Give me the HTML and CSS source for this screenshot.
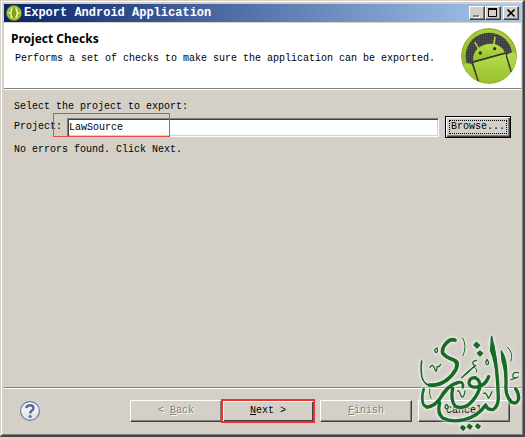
FILE: index.html
```html
<!DOCTYPE html>
<html lang="en">
<head>
<meta charset="utf-8">
<title>Export Android Application</title>
<link rel="stylesheet" href="styles.css">
</head>
<body>
<main class="window">
  <div class="titlebar">
    <svg class="app-icon" viewBox="0 0 16 16" aria-hidden="true">
      <circle cx="8" cy="8" r="7.6" fill="#a9cc28" stroke="#5d7710" stroke-width=".8"/>
      <circle cx="8" cy="8" r="5.4" fill="#809f16"/>
      <path d="M6.7 3.8Q5 4 5.2 6.2Q5.2 7.6 4 8Q5.2 8.4 5.2 10Q5 12 6.7 12.2M9.3 3.8Q11 4 10.8 6.2Q10.8 7.6 12 8Q10.8 8.4 10.8 10Q11 12 9.3 12.2" fill="none" stroke="#f2f9c0" stroke-width="1.5"/>
    </svg>
    <h1 class="caption">Export Android Application</h1>
    <div class="controls">
      <button class="control" type="button" aria-label="Minimize"><svg viewBox="0 0 12 10"><path d="M3 9h6" stroke="#fff" stroke-width="2"/><path d="M2 8h6" stroke="#808080" stroke-width="2"/></svg></button>
      <button class="control" type="button" aria-label="Maximize"><svg viewBox="0 0 12 10"><path d="M1.5 1v7.500h8V1" fill="none" stroke="#000"/><path d="M1 1h9" stroke="#000" stroke-width="2"/></svg></button>
      <button class="control close" type="button" aria-label="Close"><svg viewBox="0 0 12 10"><path d="M2.500 1.500l7 7M9.500 1.500l-7 7" stroke="#000" stroke-width="1.700"/></svg></button>
    </div>
  </div>
  <header class="banner">
    <div class="banner-text">
      <h2>Project Checks</h2>
      <p>Performs a set of checks to make sure the application can be exported.</p>
    </div>
    <svg class="logo" viewBox="0 0 168 168" aria-hidden="true">
      <defs>
        <linearGradient id="ring" x1="0" y1="0" x2="0" y2="1"><stop offset="0" stop-color="#aad03a"/><stop offset="1" stop-color="#86a91e"/></linearGradient>
        <linearGradient id="robot" x1="0" y1="0" x2="0" y2="1"><stop offset="0" stop-color="#b5dc4c"/><stop offset="1" stop-color="#98bf28"/></linearGradient>
        <pattern id="mesh" width="6" height="6" patternUnits="userSpaceOnUse"><path d="M0 0h6v6H0z" fill="#3c3e40"/><path d="M0 0h3v3H0z" fill="#55585a"/></pattern>
        <clipPath id="disc"><circle cx="84" cy="84" r="82"/></clipPath>
      </defs>
      <circle cx="84" cy="84" r="82" fill="url(#ring)" stroke="#86a52a" stroke-width="3"/>
      <circle cx="84" cy="84" r="70" fill="url(#mesh)"/>
      <g clip-path="url(#disc)">
        <path d="M42 44l12 20M102 28l-4 24" stroke="#a9cf42" stroke-width="5" stroke-linecap="round"/>
        <path d="M36 100C34 70 53 55 76 49C102 43 124 54 132 74z" fill="url(#robot)"/>
        <path d="M37 104L133 77L158 168H54z" fill="url(#robot)"/>
        <path d="M0 118Q17 99 34 110L54 168H0zM136 83Q150 68 164 77L168 140L150 138z" fill="url(#robot)"/>
        <path d="M36 102L134 75M35 109l18 54M136 82l16 54" stroke="#35382c" stroke-width="4" fill="none"/>
      </g>
      <circle cx="58" cy="75" r="5" fill="#303426"/><circle cx="101" cy="62" r="5" fill="#303426"/>
    </svg>
  </header>
  <form class="page">
    <p>Select the project to export:</p>
    <div class="field">
      <label for="project">Project:</label>
      <input id="project" type="text" value="LawSource">
      <button class="btn browse" type="button"><span>Browse...</span></button>
      <i class="highlight"></i>
    </div>
    <p>No errors found. Click Next.</p>
  </form>
  <footer class="actions">
    <button class="help" type="button" aria-label="Help">
      <svg viewBox="0 0 20 20"><defs><linearGradient id="glass" x1="0" y1="0" x2="0" y2="1"><stop offset="0" stop-color="#fff"/><stop offset="1" stop-color="#dcdfe5"/></linearGradient></defs><circle cx="10" cy="10" r="9.400" fill="url(#glass)" stroke="#667ba4" stroke-width="1.200"/><path d="M6.300 7.200Q6.700 4.300 10 4.300Q13.500 4.300 13.500 7.200Q13.500 8.700 11.700 9.700Q10.200 10.600 10.200 12.500" fill="none" stroke="#536b98" stroke-width="2.500"/><circle cx="10.200" cy="15.400" r="1.500" fill="#536b98"/></svg>
    </button>
    <div class="pair">
      <button class="btn" type="button" disabled>&lt; <u>B</u>ack</button>
      <button class="btn next" type="button"><u>N</u>ext &gt;</button>
    </div>
    <button class="btn" type="button" disabled><u>F</u>inish</button>
    <button class="btn" type="button">Cancel</button>
  </footer>
  <svg class="watermark" viewBox="0 0 375 336" aria-hidden="true">
    <defs>
      <g id="calligraphy" fill="none" stroke-linecap="round" stroke-linejoin="round">
        <path d="M168 46Q151 38 137 55Q120 75 128 88Q137 99 159 102Q177 106 174 119Q172 139 151 159Q122 184 90 183Q64 174 64 142Q62 124 65 108" stroke-width="5"/>
        <path d="M164 45Q151 40 138 55Q125 70 128 84Q137 97 160 104Q176 112 168 132Q158 151 139 166Q116 183 88 180" stroke-width="11"/>
        <path d="M71 193Q63 218 70 238Q82 254 103 239Q123 221 134 203Q149 181 174 172Q193 169 188 187" stroke-width="8"/>
        <path d="M80 246Q101 246 119 222Q142 180 174 173" stroke-width="10"/>
        <path d="M158 190Q151 225 165 243Q186 254 207 238Q229 219 239 190Q243 166 226 158Q207 157 207 175Q211 189 232 186Q257 181 266 155" stroke-width="10"/>
        <path d="M119 233Q111 266 128 279Q155 293 193 284Q235 273 257 240Q261 255 279 254Q294 245 295 220Q293 130 278 60" stroke-width="10"/>
        <path d="M293 185Q292 109 275 35L272 76Q288 112 293 185" stroke-width="5" fill="#176b27"/>
        <path d="M311 110Q319 142 318 178Q315 211 334 231Q351 240 356 221Q356 203 347 191" stroke-width="10"/>
        <path d="M304 78L306 107Q319 134 318 180Q326 110 304 78" stroke-width="4" fill="#176b27"/>
        <path d="M188 39Q202 63 189 92M323 67Q341 84 333 108M89 192Q87 210 93 220M185 158Q206 146 221 124Q234 134 230 141" stroke-width="3"/>
        <path d="M90 127Q99 112 106 136Q110 145 111 125Q119 127 122 118M173 198Q177 194 184 215Q192 220 195 198M251 205Q258 200 265 220Q271 212 276 200" stroke-width="4"/>
        <path d="M111 69Q100 74 107 82Q115 84 111 69M261 103Q252 117 263 119Q269 115 261 103M229 106Q215 108 220 119L227 122Q211 133 185 158M355 143Q337 139 339 155Q342 162 354 156Q347 161 333 164M139 238Q130 250 142 252Q149 247 139 238" stroke-width="4"/>
        <path d="M229 52l10 9l-8 8l-9-9zM240 78l8 7l-8 8l-8-8zM187 302l9 6l-6 8l-8-7zM207 298l9 6l-6 8l-8-7zM232 297l9 6l-6 8l-8-7z" stroke-width="4" fill="#176b27"/>
      </g>
    </defs>
    <use class="halo" href="#calligraphy" stroke="#fff"/>
    <use href="#calligraphy" stroke="#176b27"/>
  </svg>
</main>
</body>
</html>
```
FILE: styles.css
```css
* { box-sizing: border-box; }

body {
  margin: 0;
  background: #d4d0c8;
  color: #000;
  font: 10px/12px "Liberation Mono", monospace;
}

h1, h2, p { margin: 0; }

button, input {
  font: inherit;
  color: inherit;
  border-radius: 0;
}

.window {
  position: relative;
  display: flex;
  flex-direction: column;
  min-height: 100vh;
  padding: 3px 2px 3px 3px;
  border: solid;
  border-width: 1px 2px 2px 1px;
  border-color: #d4d0c8 #484549 #484549 #d4d0c8;
  box-shadow: inset 1px 1px #fff, inset -1px -1px #808080;
}

.titlebar {
  display: flex;
  align-items: center;
  height: 18px;
  padding: 0 2px;
  background: linear-gradient(90deg, #0a246a, #a6caf0);
}

.app-icon {
  width: 16px;
  height: 16px;
  margin-right: 2px;
}

.caption {
  flex: 1;
  color: #fff;
  font-size: 12px;
  line-height: 18px;
}

.controls { display: flex; }

.control {
  width: 16px;
  height: 14px;
  padding: 0;
  border: 1px solid;
  border-color: #fff #404040 #404040 #fff;
  background: #d4d0c8;
  box-shadow: inset -1px -1px #808080;
}

.control svg {
  display: block;
  width: 12px;
  height: 10px;
  margin: 1px;
}

.close { margin-left: 2px; }

.banner {
  display: flex;
  justify-content: space-between;
  align-items: center;
  height: 66px;
  margin-top: 1px;
  padding: 0 4px 0 7px;
  background: #fff;
  border-bottom: 1px solid #808080;
}

.banner-text { align-self: flex-start; padding-top: 8px; }

.banner h2 {
  font: bold 12px/16px "Noto Sans", sans-serif;
}

.banner p { margin: 6px 0 0 4px; }

.logo {
  flex: none;
  width: 56px;
  height: 56px;
}

.page {
  flex: 1;
  padding: 11px 10px;
  border-top: 1px solid #fff;
}

.field {
  position: relative;
  display: flex;
  align-items: center;
  gap: 6px;
  margin: 3px 0 6px;
}

.field label { width: 47px; }

.field input {
  flex: 1;
  min-width: 0;
  height: 19px;
  padding: 1px 1px 0;
  border: 1px solid;
  border-color: #808080 #fff #fff #808080;
  background: #fff;
  box-shadow: inset 1px 1px #404040, inset -1px -1px #d4d0c8;
  outline: 0;
}

.highlight {
  position: absolute;
  left: 39px;
  top: -3px;
  width: 117px;
  height: 24px;
  border: 1px solid #e84848;
}

.btn {
  width: 92px;
  height: 22px;
  padding: 0;
  border: 1px solid;
  border-color: #fff #404040 #404040 #fff;
  background: #d4d0c8;
  box-shadow: inset -1px -1px #808080;
}

.btn:disabled {
  color: #808080;
  text-shadow: 1px 1px #fff;
}

.browse {
  width: 66px;
  border-color: #000;
  box-shadow: inset 1px 1px #fff, inset -1px -1px #404040, inset -2px -2px #808080;
}

.browse span {
  display: block;
  margin: 0 3px;
  border: 1px dotted #000;
}

.actions {
  display: flex;
  align-items: center;
  gap: 6px;
  padding: 12px 11px 10px 16px;
  border-top: 1px solid #808080;
  box-shadow: inset 0 1px #fff;
}

.help {
  width: 20px;
  height: 20px;
  margin-right: auto;
  padding: 0;
  border: 0;
  background: none;
}

.help svg { display: block; }

.pair { display: flex; }

.next {
  border: 1px solid #f03030;
  box-shadow: inset 1px 1px #fff, inset -1px -1px #404040, 0 0 0 1px #f03030;
}

.watermark {
  position: absolute;
  right: -2px;
  bottom: -2px;
  width: 125px;
  height: 112px;
  pointer-events: none;
}

.halo {
  opacity: .7;
  filter: drop-shadow(0 0 5px #fff) drop-shadow(0 0 5px #fff);
}
```
